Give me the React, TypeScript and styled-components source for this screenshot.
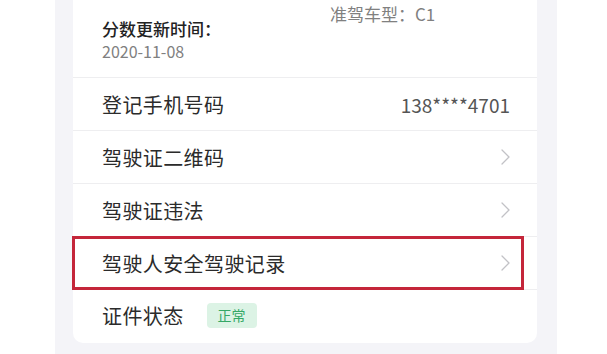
import React from 'react';
import styled, { createGlobalStyle } from 'styled-components';

const GlobalStyle = createGlobalStyle`
  html, body {
    margin: 0;
    padding: 0;
    background: #ffffff;
    font-family: "Noto Sans CJK SC", "Noto Sans", sans-serif;
  }
`;

const Page = styled.div`
  width: 607px;
  height: 354px;
  overflow: hidden;
  background: #ffffff;
`;

const Panel = styled.div`
  margin-left: 55px;
  width: 502px;
  height: 354px;
  background: #f4f4f8;
  padding: 0 20px 0 18px;
  box-sizing: border-box;
`;

const Card = styled.div`
  background: #ffffff;
  border-radius: 0 0 10px 10px;
  padding-bottom: 3px;
`;

const Header = styled.div`
  display: grid;
  grid-template-columns: 228px 1fr;
  height: 78px;
  padding-left: 29px;
  border-bottom: 1px solid #eeeef0;
  box-sizing: border-box;
`;

const HeaderCol = styled.div<{ $top: number }>`
  padding-top: ${(p) => p.$top}px;
  display: flex;
  flex-direction: column;
`;

const HeaderLabel = styled.div`
  font-size: 17px;
  line-height: 22px;
  font-weight: 500;
  color: #222222;
`;

const HeaderValue = styled.div<{ $size?: number }>`
  font-size: ${(p) => p.$size ?? 16}px;
  line-height: 22px;
  color: #808080;
`;

const Row = styled.div<{ $last?: boolean }>`
  position: relative;
  display: flex;
  align-items: center;
  height: ${(p) => (p.$last ? 50 : 53)}px;
  padding: 0 27px 0 29px;
  border-bottom: ${(p) => (p.$last ? 'none' : '1px solid #eeeef0')};
  box-sizing: border-box;
`;

const RowLabel = styled.div`
  font-size: 20px;
  color: #2b2b2b;
  letter-spacing: 0.4px;
`;

const RowValue = styled.div`
  margin-left: auto;
  font-size: 19px;
  color: #555555;
`;

const Chevron = styled.svg`
  margin-left: auto;
  width: 9px;
  height: 16px;
`;

const Badge = styled.span`
  margin-left: 23px;
  display: inline-flex;
  align-items: center;
  justify-content: center;
  width: 50px;
  height: 25px;
  border-radius: 4px;
  background: #dcf3e5;
  color: #35a866;
  font-size: 14px;
`;

const Highlight = styled.div`
  position: absolute;
  left: -1px;
  top: -1px;
  width: 452px;
  height: 54px;
  border: 3px solid #c4263a;
  box-sizing: border-box;
  pointer-events: none;
`;

const Arrow = () => (
  <Chevron viewBox="0 0 9 16" fill="none">
    <path d="M1 1 L8 8 L1 15" stroke="#c2c2c6" strokeWidth="1.3" strokeLinecap="round" strokeLinejoin="round" />
  </Chevron>
);

function App() {
  return (
    <Page>
      <GlobalStyle />
      <Panel>
        <Card>
          <Header>
            <HeaderCol $top={18}>
              <HeaderLabel>分数更新时间：</HeaderLabel>
              <HeaderValue>2020-11-08</HeaderValue>
            </HeaderCol>
            <HeaderCol $top={3}>
              <HeaderValue $size={17}>准驾车型：C1</HeaderValue>
            </HeaderCol>
          </Header>
          <Row>
            <RowLabel>登记手机号码</RowLabel>
            <RowValue>138****4701</RowValue>
          </Row>
          <Row>
            <RowLabel>驾驶证二维码</RowLabel>
            <Arrow />
          </Row>
          <Row>
            <RowLabel>驾驶证违法</RowLabel>
            <Arrow />
          </Row>
          <Row>
            <RowLabel>驾驶人安全驾驶记录</RowLabel>
            <Arrow />
            <Highlight />
          </Row>
          <Row $last>
            <RowLabel>证件状态</RowLabel>
            <Badge>正常</Badge>
          </Row>
        </Card>
      </Panel>
    </Page>
  );
}

export default App;
